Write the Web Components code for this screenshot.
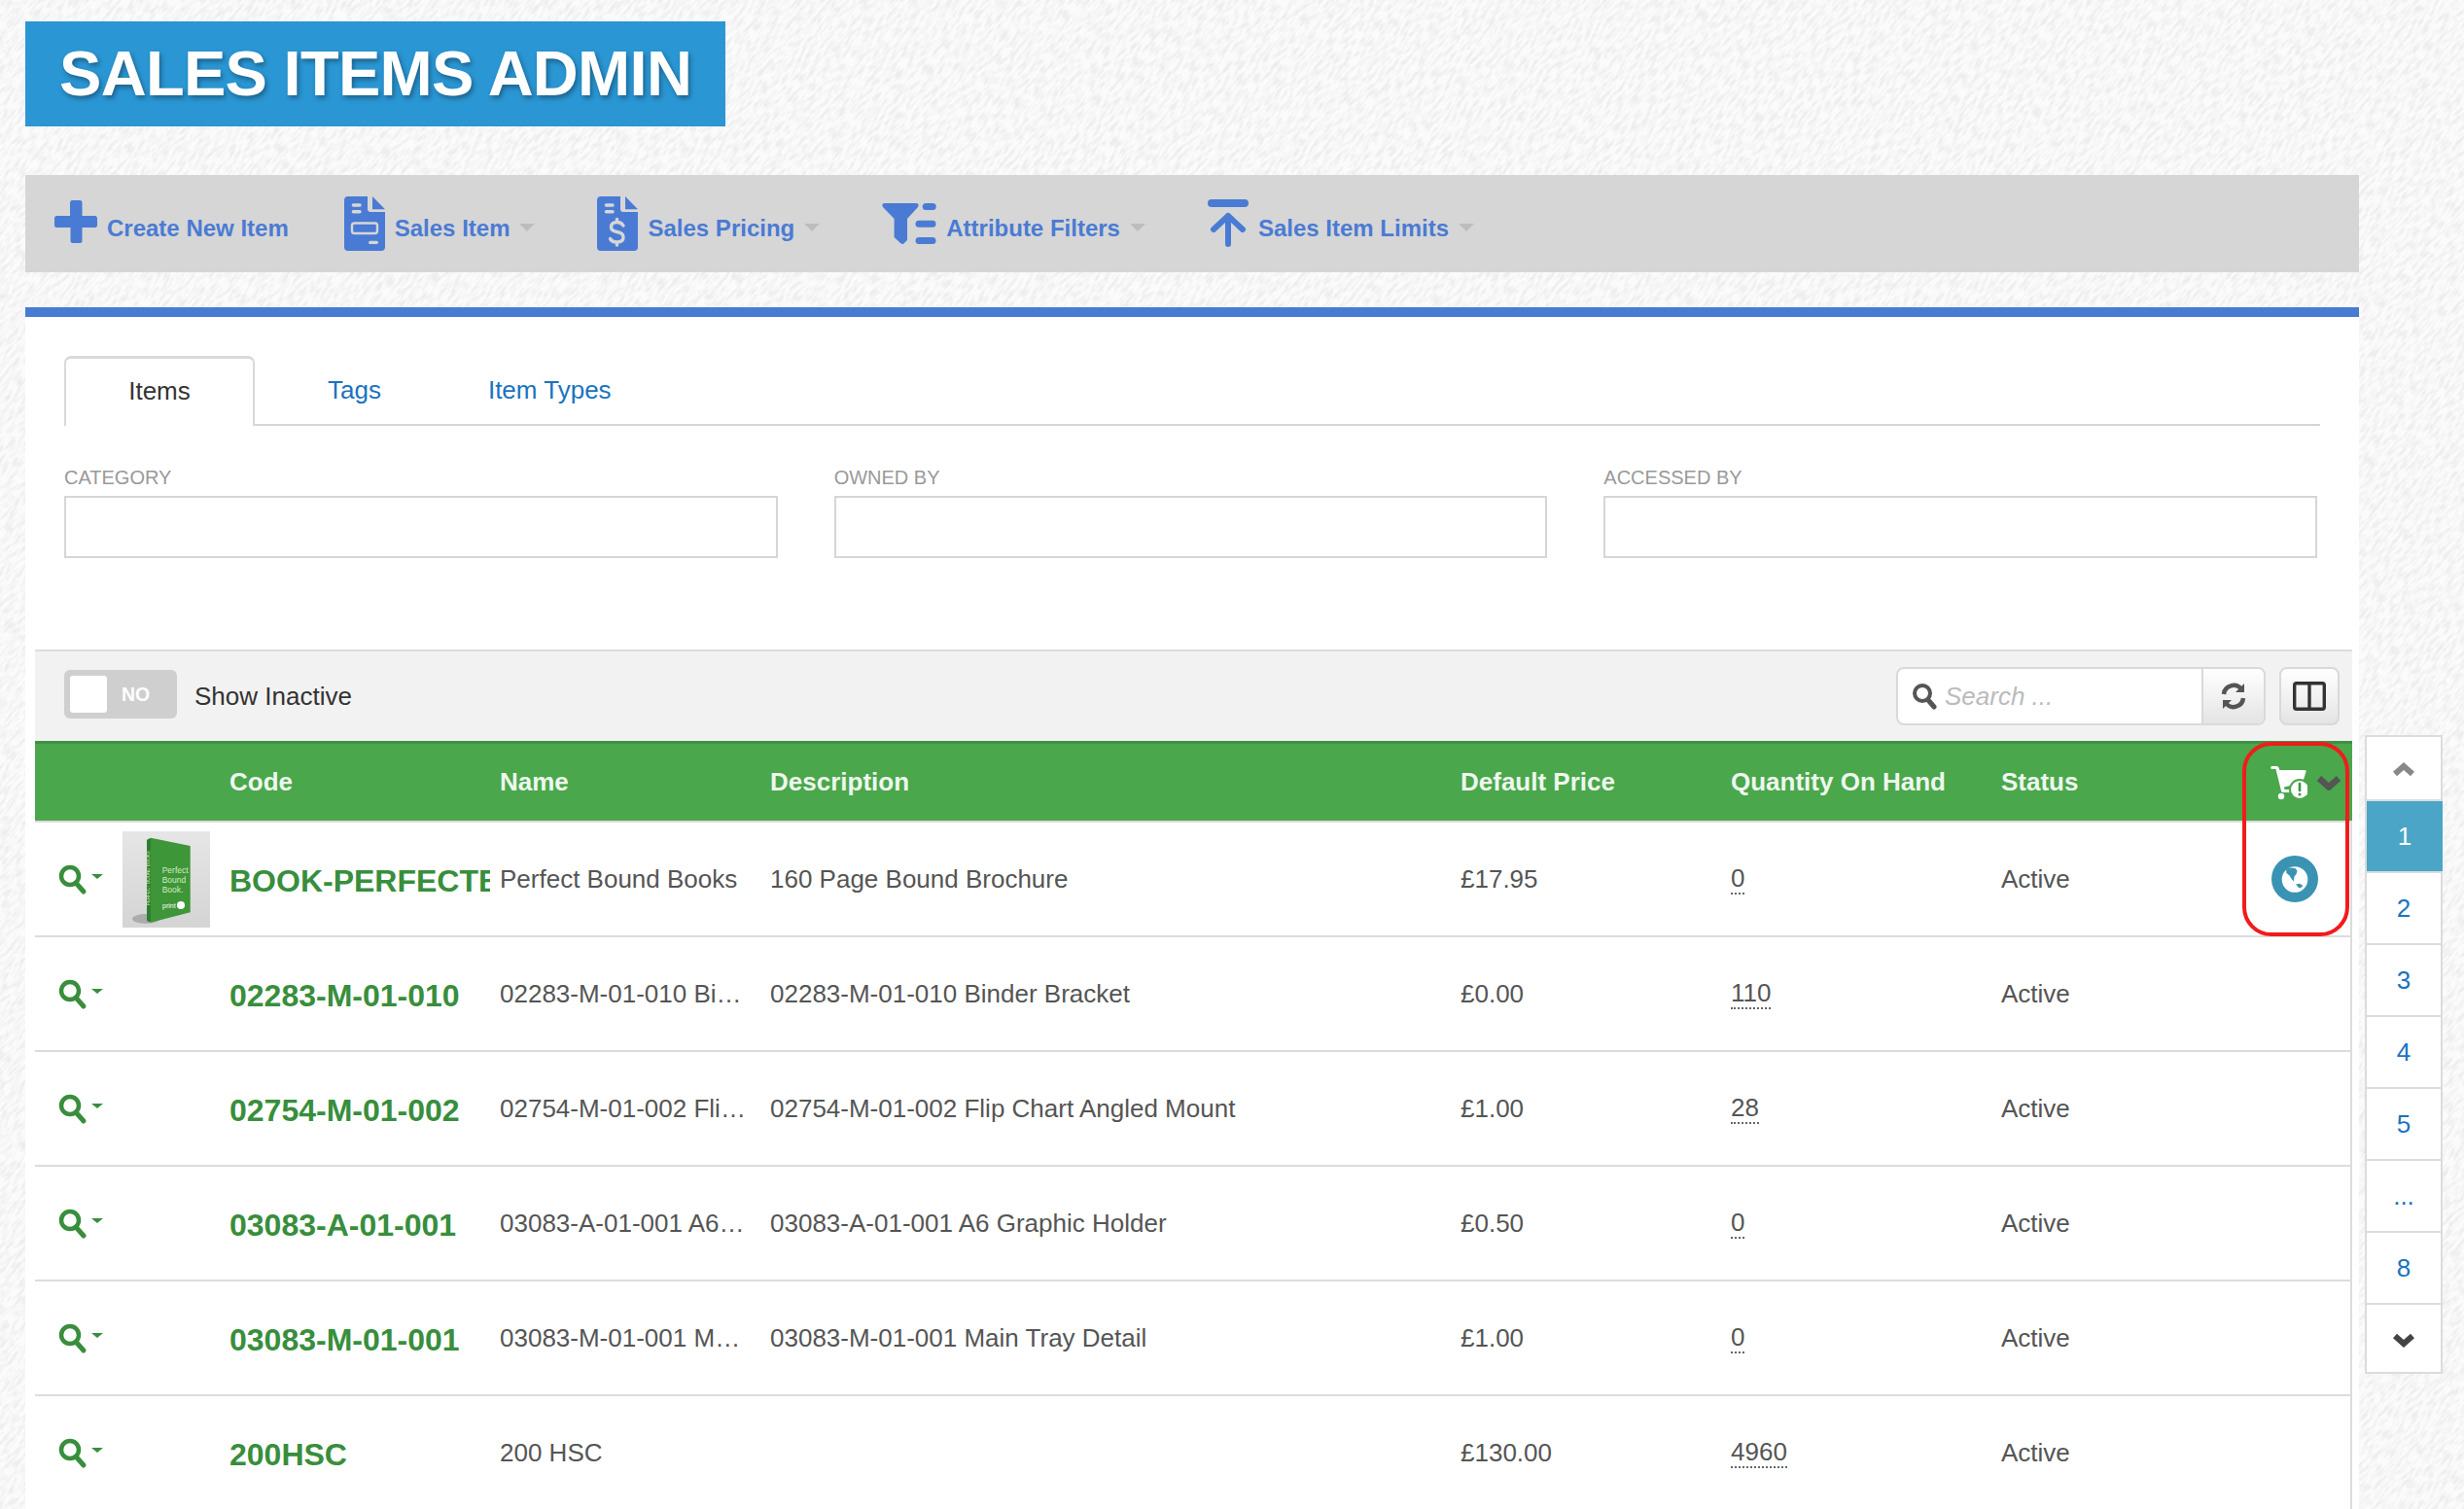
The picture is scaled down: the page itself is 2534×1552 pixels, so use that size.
<!DOCTYPE html>
<html lang="en">
<head>
<meta charset="utf-8">
<title>Sales Items Admin</title>
<style>
  html, body { margin: 0; height: 100%; overflow: hidden; }
  body {
    font-family: "Liberation Sans", Arial, sans-serif;
    font-size: 26px;
    color: #555;
    background-color: #fbfbfb;
    background-image: url("data:image/svg+xml,%3Csvg xmlns='http://www.w3.org/2000/svg' width='2534' height='1552'%3E%3Cfilter id='n' filterUnits='userSpaceOnUse' x='-1000' y='-1000' width='5000' height='5000' color-interpolation-filters='sRGB'%3E%3CfeTurbulence type='fractalNoise' baseFrequency='.09 .3' numOctaves='2'/%3E%3CfeColorMatrix values='0 0 0 0 .93 0 0 0 0 .93 0 0 0 0 .93 3 0 0 0 -1.2'/%3E%3C/filter%3E%3Crect x='-1000' y='-1000' width='5000' height='5000' transform='rotate(-50 1267 776)' filter='url(%23n)'/%3E%3C/svg%3E");
  }
</style>
</head>
<body>
<admin-page>
  <page-title>SALES ITEMS ADMIN</page-title>
  <action-bar>
    <action-item icon="plus">Create New Item</action-item>
    <action-item icon="doc" caret>Sales Item</action-item>
    <action-item icon="price" caret>Sales Pricing</action-item>
    <action-item icon="filter" caret>Attribute Filters</action-item>
    <action-item icon="limit" caret>Sales Item Limits</action-item>
  </action-bar>
  <panel-row>
    <items-panel>
      <tab-strip></tab-strip>
      <filter-row>
        <filter-field>CATEGORY</filter-field>
        <filter-field>OWNED BY</filter-field>
        <filter-field>ACCESSED BY</filter-field>
      </filter-row>
      <table-bar></table-bar>
      <items-table></items-table>
    </items-panel>
    <side-pager></side-pager>
  </panel-row>
</admin-page>

<script>
const BLUE = '#4a7bd4';
const BAR = '#d6d6d6';
const GREEN = '#388e3c';

// Toolbar glyphs, each at the pixel size it has in the bar
const ICONS = {
  plus: `<svg width="44" height="44" viewBox="0 0 44 44" style="margin-top:-4px"><path fill="${BLUE}" d="M18 0h8a2.500 2.500 0 0 1 2.500 2.500V16H41.500A2.500 2.500 0 0 1 44 18.500v7a2.500 2.500 0 0 1-2.500 2.500H28.500v13.500A2.500 2.500 0 0 1 26 44h-7a2.500 2.500 0 0 1-2.500-2.500V28H2.500A2.500 2.500 0 0 1 0 25.500v-7A2.500 2.500 0 0 1 2.500 16H16V2.500A2.500 2.500 0 0 1 18 0z"/></svg>`,
  doc: docIcon(`<rect x="8" y="27.500" width="26" height="10.500" rx="2.500" fill="none" stroke="${BAR}" stroke-width="2.400"/><rect x="25" y="45.700" width="10" height="3.400" rx="1.700" fill="${BAR}"/>`),
  price: docIcon(`<path fill="none" stroke="${BAR}" stroke-width="3.400" stroke-linecap="round" d="M27 30Q25 26.500 20.500 26.500Q14.500 26.500 14.500 31.500Q14.500 35.500 20.500 36.500Q27 37.500 27 42Q27 47 20.500 47Q15 47 13.500 43.500M20.500 23.500V26.500M20.500 47V50"/>`),
  filter: `<svg width="56" height="42" viewBox="0 0 56 42"><path fill="${BLUE}" d="M3 0H35Q39 0 37 4L26 16V38L22 42Q20 42 19 41L12.600 35V16L1 4Q-1 0 3 0Z"/><rect x="41.700" width="14" height="7" rx="3.500" fill="${BLUE}"/><rect x="34.500" y="17.700" width="21" height="7" rx="3.500" fill="${BLUE}"/><rect x="34.500" y="35" width="21" height="7" rx="3.500" fill="${BLUE}"/></svg>`,
  limit: `<svg width="42" height="50" viewBox="0 0 42 50"><rect width="42" height="8" rx="4" fill="${BLUE}"/><path fill="none" stroke="${BLUE}" stroke-width="6" stroke-linecap="round" stroke-linejoin="round" d="M6 31L21 17L36 31M21 17V46"/></svg>`
};

function docIcon(inner) {
  return `<svg width="42" height="56" viewBox="0 0 42 56"><path fill="${BLUE}" d="M4 0H24V13Q24 16 27 16H42V52Q42 56 38 56H4Q0 56 0 52V4Q0 0 4 0Z"/><path fill="${BLUE}" d="M29 0L42 13.300H29Z"/><rect x="7.700" y="7.300" width="10" height="3.400" rx="1.700" fill="${BAR}"/><rect x="7.700" y="14" width="10" height="3.400" rx="1.700" fill="${BAR}"/>${inner}</svg>`;
}

const SEARCH_ICON = `<svg width="50" height="34" viewBox="0 0 50 34"><circle cx="14" cy="13" r="9" fill="none" stroke="${GREEN}" stroke-width="4.500"/><path d="M20 20l8 9" stroke="${GREEN}" stroke-width="5" stroke-linecap="round"/><path d="M36 11h12l-6 5z" fill="${GREEN}"/></svg>`;

const GLOBE = `<svg width="48" height="48" viewBox="0 0 48 48"><circle cx="24" cy="24" r="24" fill="#3a93b3"/><circle cx="24" cy="24.500" r="13.300" fill="#fff"/><path fill="#3a93b3" d="M15 14L19 12.500L24.500 13L26.500 15.700L25.500 19L23.500 21.500L22.800 26.500L21 24.500L18.500 20.500L15.500 18Z"/><path fill="#3a93b3" d="M25 29.500L29 28.800L32.500 31L29.500 33.500L27.300 32.300Z"/></svg>`;

const BOOK = `<svg width="90" height="100" viewBox="0 0 90 100">
  <defs><linearGradient id="g" x1="0" y1="0" x2="0" y2="1"><stop offset="0" stop-color="#e6e6e6"/><stop offset="1" stop-color="#d4d4d4"/></linearGradient></defs>
  <rect width="90" height="100" fill="url(#g)"/>
  <ellipse cx="24" cy="90" rx="14" ry="5" fill="#8a8a8a" opacity=".55"/>
  <path d="M25 8.700L29 6.700V93.700L25 92Z" fill="#2f7d32"/>
  <path d="M29 6.700L69.700 15V83.300L29 93.700Z" fill="#3d9637"/>
  <g font-family="Liberation Sans, sans-serif" font-size="8.500" fill="#d5ecc8">
    <text x="40.700" y="43">Perfect</text><text x="40.700" y="53">Bound</text><text x="40.700" y="63">Book.</text>
    <text x="41" y="79" font-size="7" fill="#fff">print</text>
  </g>
  <text transform="translate(27.500 76) rotate(-90)" font-family="Liberation Sans, sans-serif" font-size="4.500" fill="#cfe8bd">PERFECT BOUND BOOKS</text>
  <circle cx="60" cy="76" r="4" fill="#fff"/>
</svg>`;

class AdminPage extends HTMLElement {
  constructor() {
    super();
    this.attachShadow({ mode: 'open' });
    this.shadowRoot.innerHTML = `<style>
      :host { display: block; padding: 22px 0 0 26px; }
    </style><slot></slot>`;
  }
}

class PageTitle extends HTMLElement {
  constructor() {
    super();
    this.attachShadow({ mode: 'open' });
    this.shadowRoot.innerHTML = `<style>
      :host {
        display: block; box-sizing: border-box; width: 720px; height: 108px;
        padding-left: 35px; background: #2a96d4; color: #fff;
        font: bold 65px/108px "Liberation Sans", Arial, sans-serif; letter-spacing: -.7px;
        text-shadow: 2px 3px 5px rgba(0,0,0,.35); white-space: nowrap;
      }
    </style><slot></slot>`;
  }
}

class ActionBar extends HTMLElement {
  constructor() {
    super();
    this.attachShadow({ mode: 'open' });
    this.shadowRoot.innerHTML = `<style>
      :host {
        display: flex; align-items: center; box-sizing: border-box;
        width: 2400px; height: 100px; margin-top: 50px; padding-left: 30px;
        background: ${BAR};
      }
    </style><slot></slot>`;
  }
}

class ActionItem extends HTMLElement {
  constructor() {
    super();
    this.attachShadow({ mode: 'open' });
  }

  connectedCallback() {
    const hasCaret = this.hasAttribute('caret');
    this.shadowRoot.innerHTML = `<style>
      :host {
        display: flex; align-items: center; margin-right: ${hasCaret ? 64 : 57}px;
        color: ${BLUE}; font: bold 24px/30px "Liberation Sans", Arial, sans-serif; white-space: nowrap;
      }
      svg { display: block; }
      .label { margin: 10px 0 0 10px; }
      .caret {
        width: 0; height: 0; margin: 8px 0 0 10px;
        border: 8px solid transparent; border-top-color: #bdbdbd; border-bottom: 0;
      }
    </style>${ICONS[this.getAttribute('icon')]}<span class="label"><slot></slot></span>${hasCaret ? '<span class="caret"></span>' : ''}`;
  }
}

class PanelRow extends HTMLElement {
  constructor() {
    super();
    this.attachShadow({ mode: 'open' });
    this.shadowRoot.innerHTML = `<style>
      :host { display: flex; align-items: flex-start; margin-top: 36px; }
    </style><slot></slot>`;
  }
}

class ItemsPanel extends HTMLElement {
  constructor() {
    super();
    this.attachShadow({ mode: 'open' });
    this.shadowRoot.innerHTML = `<style>
      :host {
        display: block; box-sizing: border-box; width: 2400px; height: 1300px;
        padding-top: 40px; border-top: 10px solid ${BLUE}; background: #fff;
      }
    </style><slot></slot>`;
  }
}

class TabStrip extends HTMLElement {
  constructor() {
    super();
    this.attachShadow({ mode: 'open' });
    this.shadowRoot.innerHTML = `<style>
      :host {
        display: flex; height: 70px; margin: 0 40px; border-bottom: 2px solid #d6d6d6;
        font-size: 26px; line-height: 71px;
      }
      a { color: #1a73c0; padding: 0 55px; }
      a.on {
        box-sizing: border-box; width: 196px; height: 72px; margin-right: 20px; padding: 0; text-align: center;
        color: #333; background: #fff; line-height: 66px;
        border: 2px solid #d9d9d9; border-top-width: 3px; border-bottom: 0; border-radius: 7px 7px 0 0;
      }
    </style><a class="on">Items</a><a>Tags</a><a>Item Types</a>`;
  }
}

class FilterRow extends HTMLElement {
  constructor() {
    super();
    this.attachShadow({ mode: 'open' });
    this.shadowRoot.innerHTML = `<style>
      :host { display: grid; grid-template-columns: repeat(3, 1fr); gap: 58px; margin: 41px 43px 0 40px; }
    </style><slot></slot>`;
  }
}

class FilterField extends HTMLElement {
  constructor() {
    super();
    this.attachShadow({ mode: 'open' });
    this.shadowRoot.innerHTML = `<style>
      :host { display: block; color: #999; font-size: 20px; line-height: 24px; }
      .box { box-sizing: border-box; height: 64px; margin-top: 7px; border: 2px solid #d6d6d6; background: #fff; }
    </style><slot></slot><div class="box"></div>`;
  }
}

class TableBar extends HTMLElement {
  constructor() {
    super();
    this.attachShadow({ mode: 'open' });
    this.shadowRoot.innerHTML = `<style>
      :host {
        display: flex; align-items: center; box-sizing: border-box;
        width: 2383px; height: 94px; margin: 94px 0 0 10px; padding: 0 13px 0 30px;
        border-top: 2px solid #dcdcdc; background: #f2f2f2;
      }
      .switch {
        display: flex; align-items: center; box-sizing: border-box; width: 116px; height: 50px;
        margin-top: -4px; padding: 0 6px; border-radius: 6px; background: #cfcfcf;
        color: #fff; font-size: 19.400px; font-weight: bold;
      }
      .knob { width: 38px; height: 38px; margin-right: 15px; border-radius: 3px; background: #fff; }
      .text { margin-left: 18px; color: #333; font-size: 26px; }
      .search {
        display: flex; box-sizing: border-box; width: 380px; height: 60px; margin-left: auto;
        border: 2px solid #d9d9d9; border-radius: 8px; background: #fff; overflow: hidden;
      }
      .field {
        flex: 1; display: flex; align-items: center; padding-left: 14px; gap: 8px;
        color: #bbb; font-style: italic; font-size: 26px;
      }
      .btn {
        display: flex; align-items: center; justify-content: center;
        background: linear-gradient(#fff, #e4e4e4);
      }
      .refresh { width: 62px; border-left: 2px solid #d9d9d9; }
      .cols {
        box-sizing: border-box; width: 62px; height: 60px; margin-left: 14px;
        border: 2px solid #d9d9d9; border-radius: 8px;
      }
    </style>
    <div class="switch"><span class="knob"></span>NO</div>
    <span class="text">Show Inactive</span>
    <div class="search">
      <span class="field">
        <svg width="26" height="28" viewBox="0 0 26 28"><circle cx="11" cy="11" r="8" fill="none" stroke="#555" stroke-width="4"/><path d="M17 18l6 7" stroke="#555" stroke-width="5" stroke-linecap="round"/></svg>
        Search ...
      </span>
      <span class="btn refresh">
        <svg width="26" height="30" viewBox="0 0 26 30" fill="none" stroke="#555" stroke-width="4.500"><path d="M3 13A10 10 0 0 1 21 8"/><path d="M23 17A10 10 0 0 1 5 22"/><path d="M24 2v9h-9z" fill="#555" stroke="none"/><path d="M2 28v-9h9z" fill="#555" stroke="none"/></svg>
      </span>
    </div>
    <div class="btn cols">
      <svg width="34" height="30" viewBox="0 0 34 30" fill="none" stroke="#333" stroke-width="3.400"><rect x="1.700" y="1.700" width="30.600" height="26.600" rx="2"/><path d="M17 1.700v26.600"/></svg>
    </div>`;
  }
}

const ROWS = [
  { code: 'BOOK-PERFECTBOUND', name: 'Perfect Bound Books', desc: '160 Page Bound Brochure', price: '£17.95', qty: '0', thumb: true },
  { code: '02283-M-01-010', name: '02283-M-01-010 Binder Bracket', desc: '02283-M-01-010 Binder Bracket', price: '£0.00', qty: '110' },
  { code: '02754-M-01-002', name: '02754-M-01-002 Flip Chart Angled Mount', desc: '02754-M-01-002 Flip Chart Angled Mount', price: '£1.00', qty: '28' },
  { code: '03083-A-01-001', name: '03083-A-01-001 A6 Graphic Holder', desc: '03083-A-01-001 A6 Graphic Holder', price: '£0.50', qty: '0' },
  { code: '03083-M-01-001', name: '03083-M-01-001 Main Tray Detail', desc: '03083-M-01-001 Main Tray Detail', price: '£1.00', qty: '0' },
  { code: '200HSC', name: '200 HSC', desc: '', price: '£130.00', qty: '4960' }
];

class ItemsTable extends HTMLElement {
  constructor() {
    super();
    this.attachShadow({ mode: 'open' });
    const rows = ROWS.map(r => `<div class="row">
        <div class="act">${SEARCH_ICON}${r.thumb ? `<span class="thumb">${BOOK}</span>` : ''}</div>
        <div class="code">${r.code}</div>
        <div class="name">${r.name}</div>
        <div>${r.desc}</div>
        <div>${r.price}</div>
        <div><span class="qty">${r.qty}</span></div>
        <div>Active</div>
        <div class="end">${r.thumb ? GLOBE : ''}</div>
      </div>`).join('');
    this.shadowRoot.innerHTML = `<style>
      :host {
        display: block; position: relative; box-sizing: border-box; width: 2383px; margin-left: 10px;
        border-right: 2px solid #dcdcdc; font-size: 26px; color: #555;
      }
      .head, .row { display: grid; grid-template-columns: 200px 278px 278px 710px 278px 278px 250px 1fr; align-items: center; }
      .head {
        box-sizing: border-box; height: 84px; margin-right: -2px; border-top: 3px solid #3f9143;
        border-bottom: 2px solid #ddd; background: #4aa74b; color: #eef7ee; font-weight: bold;
      }
      .row { box-sizing: border-box; height: 118px; border-bottom: 2px solid #dcdcdc; }
      .row > div, .head > div { white-space: nowrap; overflow: hidden; }
      .act { display: flex; align-items: center; padding: 0 0 0 22px; height: 100px; }
      .act svg:first-child { flex: none; margin-top: 1px; }
      .thumb { display: block; margin-left: 18px; }
      .thumb svg { display: block; }
      .code { margin: 5px 10px 0 0; color: ${GREEN}; font-size: 32px; font-weight: bold; }
      .name { margin-right: 24px; text-overflow: ellipsis; }
      .qty { display: inline-block; line-height: 1.100; border-bottom: 2px dotted #666; }
      .end { display: flex; justify-content: center; margin-right: 6px; }
      .cart { display: flex; align-items: center; justify-content: flex-end; padding-right: 11px; }
      .mark {
        position: absolute; box-sizing: border-box; left: 2270px; top: 1px; width: 110px; height: 200px;
        border: 4px solid #f01c1c; border-radius: 30px; pointer-events: none;
      }
    </style>
    <div class="head">
      <div></div><div>Code</div><div>Name</div><div>Description</div><div>Default Price</div><div>Quantity On Hand</div><div>Status</div>
      <div class="cart">
        <svg width="38" height="36" viewBox="0 0 38 36" style="margin-right:9px"><path fill="#fff" d="M1 1H6.500Q8 1 8.500 2.500L9.300 5H35Q37 5 36.500 7L33 18L14 22.500L14.500 25H26V28H13Q11.500 28 11 26.500L5.500 4H1Q-.5 2.500 1 1Z"/><circle cx="11" cy="32" r="3.200" fill="#fff"/><circle cx="30" cy="25" r="11" fill="#4aa74b"/><circle cx="30" cy="25" r="9" fill="#fff"/><path d="M30 19v7" stroke="#3f9143" stroke-width="2.600" stroke-linecap="round"/><circle cx="30" cy="30" r="1.500" fill="#3f9143"/></svg>
        <svg width="26" height="16" viewBox="0 0 26 16"><path d="M3 3.500l10 9 10-9" fill="none" stroke="#555" stroke-width="6.500"/></svg>
      </div>
    </div>
    ${rows}
    <div class="mark"></div>`;
  }
}

class SidePager extends HTMLElement {
  constructor() {
    super();
    this.attachShadow({ mode: 'open' });
    const pages = ['1', '2', '3', '4', '5', '...', '8'];
    this.shadowRoot.innerHTML = `<style>
      :host {
        display: block; box-sizing: border-box; width: 80px; margin: 440px 0 0 6px;
        border: 2px solid #dcdcdc; background: #fff; font-size: 26px; color: #1a73c0; text-align: center;
      }
      div { display: flex; align-items: center; justify-content: center; box-sizing: border-box; height: 74px; border-bottom: 2px solid #dcdcdc; }
      div.on { background: #4aa5c7; color: #fff; margin-right: -2px; }
      div.chev { height: 66px; }
      div.chev svg { margin-top: 2px; }
      div.chev:last-child { height: 69px; border-bottom: 0; }
      div.chev:last-child svg { margin-top: 4px; }
    </style>
    <div class="chev"><svg width="24" height="15" viewBox="0 0 24 15"><path d="M3 12l9-8 9 8" fill="none" stroke="#888" stroke-width="6"/></svg></div>
    ${pages.map((p, i) => `<div class="${i === 0 ? 'on' : ''}">${p}</div>`).join('')}
    <div class="chev"><svg width="24" height="15" viewBox="0 0 24 15"><path d="M3 3l9 8 9-8" fill="none" stroke="#444" stroke-width="6"/></svg></div>`;
  }
}

customElements.define('admin-page', AdminPage);
customElements.define('page-title', PageTitle);
customElements.define('action-bar', ActionBar);
customElements.define('action-item', ActionItem);
customElements.define('panel-row', PanelRow);
customElements.define('items-panel', ItemsPanel);
customElements.define('tab-strip', TabStrip);
customElements.define('filter-row', FilterRow);
customElements.define('filter-field', FilterField);
customElements.define('table-bar', TableBar);
customElements.define('items-table', ItemsTable);
customElements.define('side-pager', SidePager);
</script>
</body>
</html>
